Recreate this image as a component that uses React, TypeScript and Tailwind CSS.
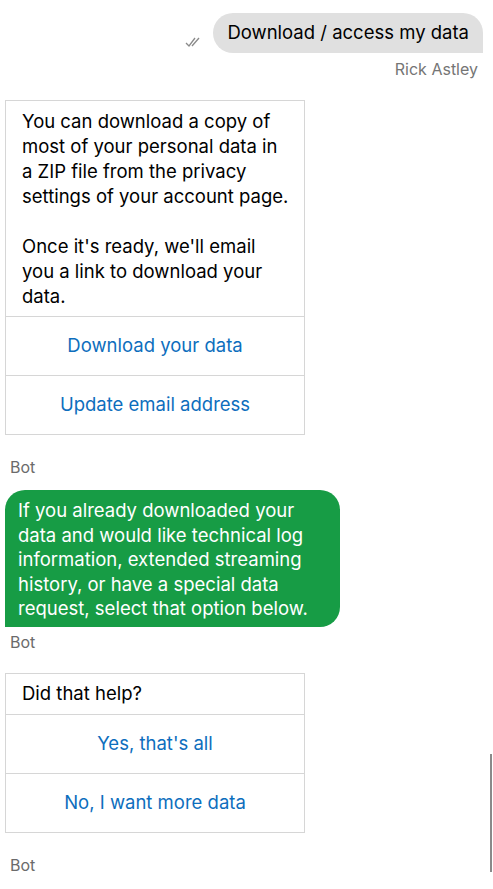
import React from 'react';

const font = { fontFamily: 'Inter, "Noto Sans", sans-serif' };

const CardButton: React.FC<{ label: string }> = ({ label }) => (
  <div className="h-[59px] border-t border-[#d6d6d6] flex items-center justify-center text-[18.5px] text-[#0d6ebd]">
    {label}
  </div>
);

const BotLabel: React.FC<{ className?: string }> = ({ className }) => (
  <div className={`pl-[10px] text-[16px] text-[#6b6b6b] leading-[20px] ${className ?? ''}`}>Bot</div>
);

export default function App() {
  return (
    <div className="relative w-[493px] h-[889px] bg-white overflow-hidden" style={font}>
      <div className="flex flex-col">
        <div className="flex justify-end items-end pt-[13px] pr-[10px] gap-[10px]">
          <svg width="18" height="10" viewBox="0 0 18 10" className="mb-[6px]" fill="none" stroke="#8a8a8a" strokeWidth="1.3">
            <path d="M1 6l3 3 6-8" />
            <path d="M7 9l7-8" />
          </svg>
          <div className="h-[40px] px-[14px] flex items-center bg-[#e0e0e0] rounded-[20px] rounded-br-none text-[18.5px] text-black">
            Download / access my data
          </div>
        </div>
        <div className="text-right pr-[15px] pt-[6px] text-[16px] text-[#757575] leading-[20px]">Rick Astley</div>

        <div className="ml-[5px] mt-[21px] w-[300px] border border-[#d6d6d6]">
          <div className="pl-[16px] pr-[14px] pt-[8px] pb-[7px] text-[18.5px] leading-[25px] text-black">
            <p>You can download a copy of most of your personal data in a ZIP file from the privacy settings of your account page.</p>
            <p className="mt-[25px]">Once it's ready, we'll email you a link to download your data.</p>
          </div>
          <CardButton label="Download your data" />
          <CardButton label="Update email address" />
        </div>
        <BotLabel className="mt-[22px]" />

        <div className="ml-[5px] mt-[13px] w-[335px] bg-[#179c45] text-white rounded-[20px] rounded-bl-none pl-[13px] pr-[30px] pt-[8px] pb-[6px] text-[18.5px] leading-[24.5px]">
          If you already downloaded your data and would like technical log information, extended streaming history, or have a special data request, select that option below.
        </div>
        <BotLabel className="mt-[5px]" />

        <div className="ml-[5px] mt-[21px] w-[300px] border border-[#d6d6d6]">
          <div className="h-[40px] pl-[16px] flex items-center text-[18.5px] text-black">Did that help?</div>
          <CardButton label="Yes, that's all" />
          <CardButton label="No, I want more data" />
        </div>
        <BotLabel className="mt-[22px]" />
      </div>
      <div className="absolute right-[1px] top-[754px] w-[2px] h-[118px] bg-[#8a8a8a]" />
    </div>
  );
}
